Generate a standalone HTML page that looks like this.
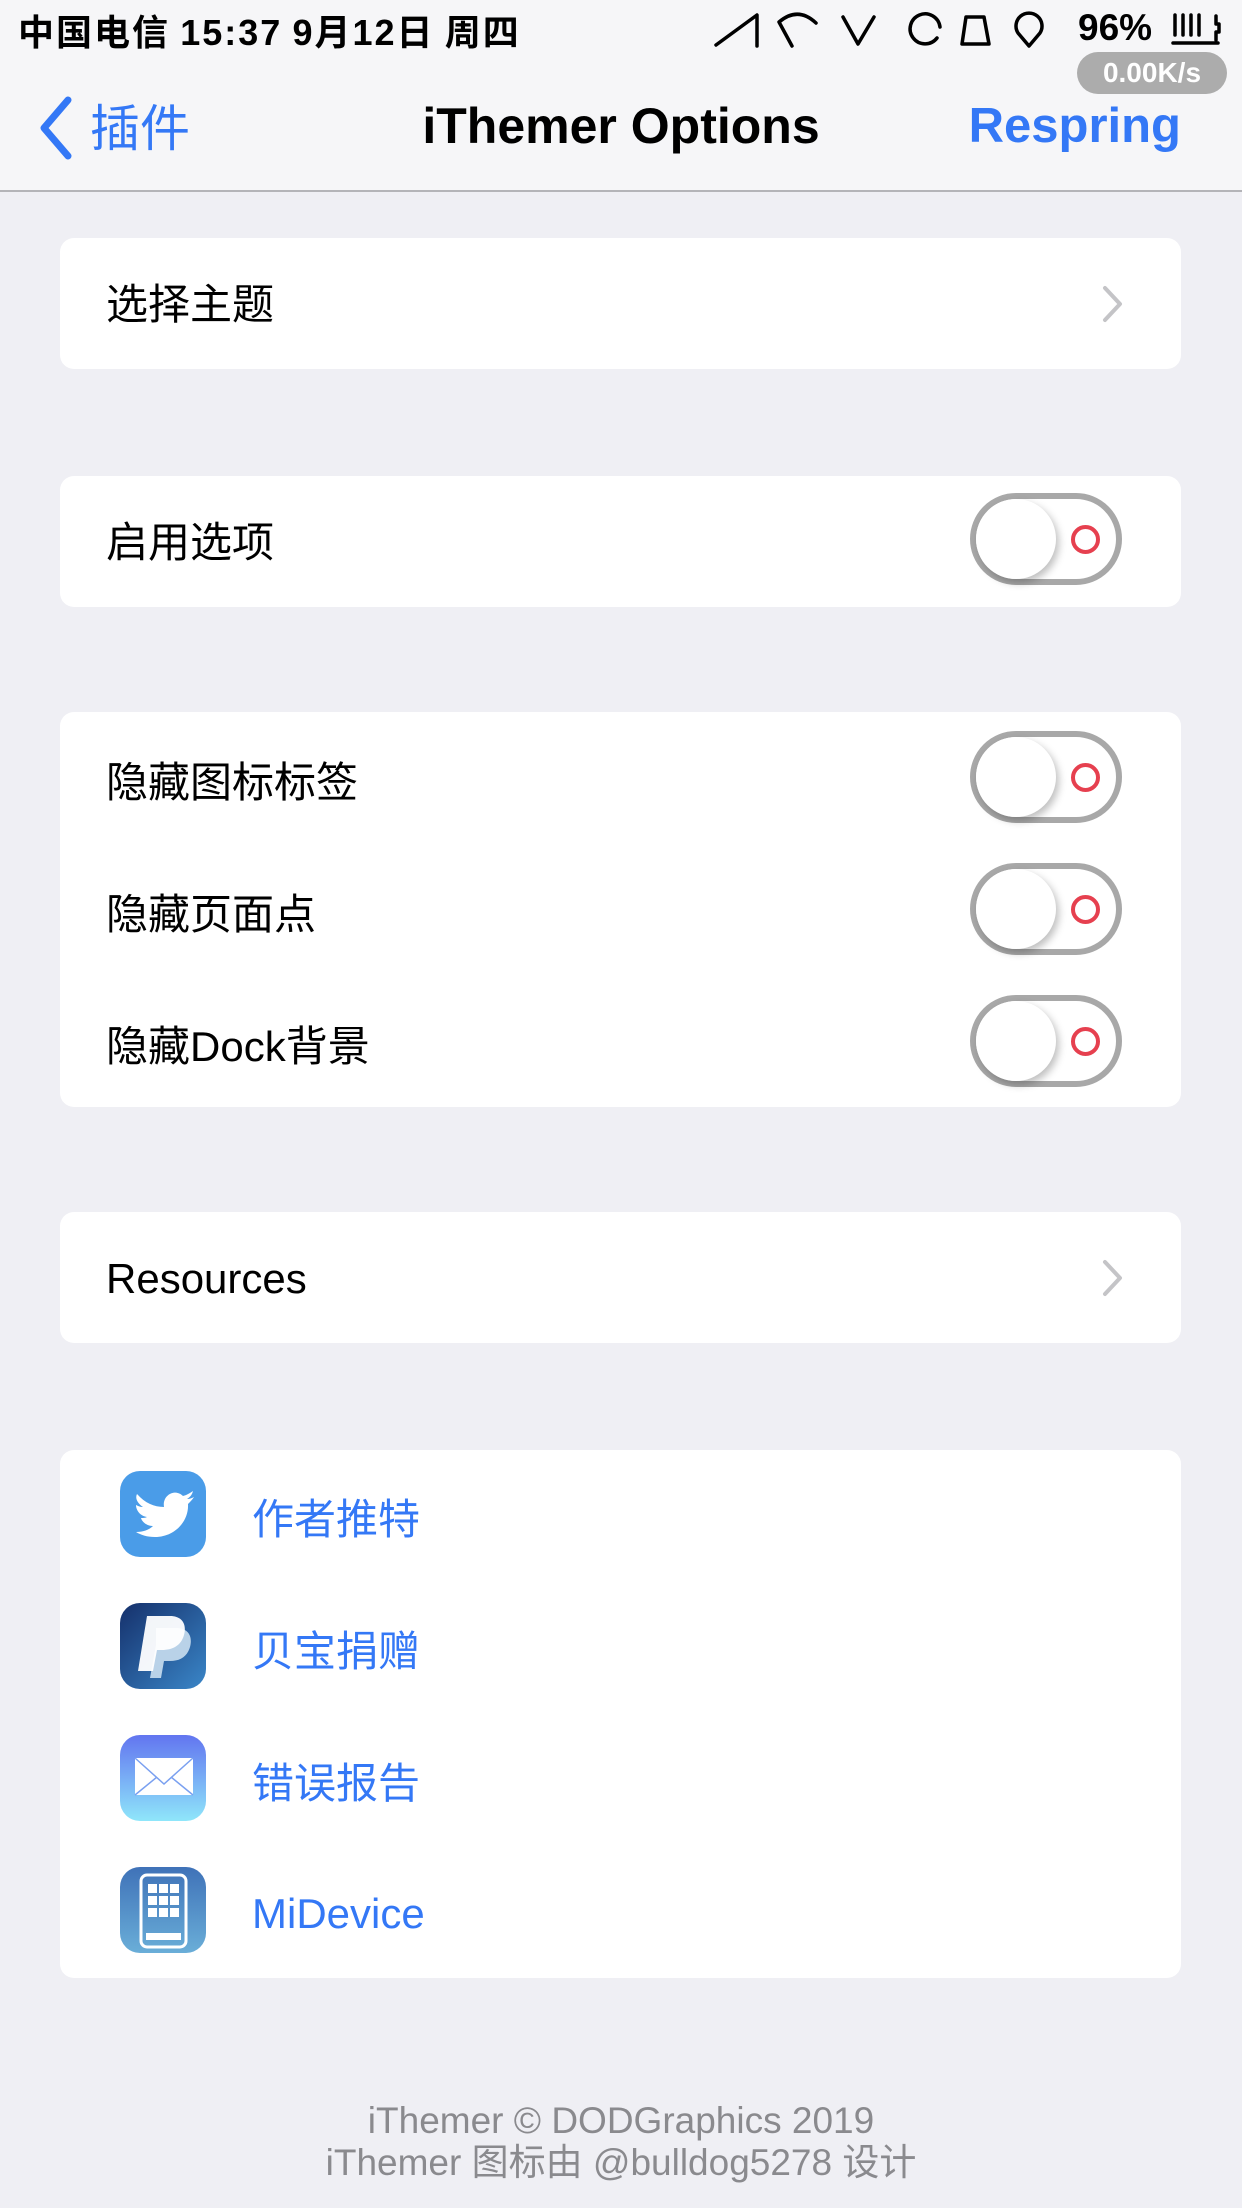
<!DOCTYPE html>
<html><head><meta charset="utf-8"><style>
*{margin:0;padding:0;box-sizing:border-box}
body{width:1242px;height:2208px;background:#efeff4;font-family:"Liberation Sans","Noto Sans CJK SC",sans-serif;position:relative;overflow:hidden}
.abs{position:absolute}
.nav{position:absolute;left:0;top:0;width:1242px;height:192px;background:#f6f6f8;border-bottom:2px solid #b4b4b8}
.card{position:absolute;left:60px;width:1121px;background:#fff;border-radius:14px}
.lbl{position:absolute;left:46px;font-size:42px;color:#000;font-family:"Noto Sans CJK SC","Liberation Sans",sans-serif}
.chev{position:absolute;right:56px}
.tog{position:absolute;left:910px;width:152px;height:92px;border:6px solid #a8a8a8;border-radius:46px;background:#fff}
.tog .k{position:absolute;left:0;top:0;width:80px;height:80px;border-radius:50%;background:#fff;box-shadow:3px 4px 8px rgba(0,0,0,.25)}
.tog .r{position:absolute;left:95px;top:26px;width:29px;height:29px;border:4px solid #e6404f;border-radius:50%}
.link{position:absolute;left:192px;font-size:42px;color:#3478f6;font-family:"Noto Sans CJK SC","Liberation Sans",sans-serif}
.ic{position:absolute;left:60px;width:86px;height:86px;border-radius:20px;overflow:hidden}
</style></head><body>
<div class="nav"></div>
<div class="abs" style="left:18px;top:4px;font-size:36px;font-weight:bold;color:#000;font-family:'Noto Sans CJK SC','Liberation Sans',sans-serif;letter-spacing:2px">中国电信 <span style="font-family:'Liberation Sans'">15:37</span> <span style="font-family:'Liberation Sans'">9</span>月<span style="font-family:'Liberation Sans'">12</span>日 周四</div>
<svg class="abs" style="left:700px;top:0" width="542" height="60" viewBox="700 0 542 60" fill="none" stroke="#000" stroke-width="3.5" stroke-linecap="round" stroke-linejoin="round">
<path d="M716 45 L757 15 L757 46"/>
<path d="M792 46 L779 22 Q798 6 816 23"/>
<path d="M843 17 L858 44 L874 17"/>
<path d="M937 38 A15 15 0 1 1 940 27"/>
<path d="M962 44 L989 44 L984 17 L966 17 Z"/>
<path d="M1029 46 L1018 33 A13 13 0 1 1 1040 33 Z"/>
<g transform="translate(17,0)"><path d="M1158 15v20M1166 15v20M1174 15v20M1182 15v20M1156 43h45M1199 16v8h3v8h-3v8"/></g>
</svg>
<div class="abs" style="left:1078px;top:7px;font-size:37px;font-weight:bold">96%</div>
<div class="abs" style="left:1077px;top:52px;width:150px;height:42px;border-radius:21px;background:#acacac;color:#fff;font-size:28px;font-weight:bold;text-align:center;line-height:42px">0.00K/s</div>
<svg class="abs" style="left:36px;top:96px" width="40" height="64" viewBox="0 0 40 64"><path d="M32 4 L8 32 L32 60" fill="none" stroke="#3478f6" stroke-width="7" stroke-linecap="round" stroke-linejoin="round"/></svg>
<div class="abs" style="left:90px;top:95px;font-size:50px;color:#3478f6;font-family:'Noto Sans CJK SC',sans-serif;line-height:60px">插件</div>
<div class="abs" style="left:0;width:1242px;top:96px;text-align:center;font-size:50px;font-weight:bold;color:#000;line-height:60px">iThemer Options</div>
<div class="abs" style="right:61px;top:96px;font-size:49px;font-weight:bold;color:#3478f6;line-height:60px">Respring</div>

<div class="card" style="top:238px;height:131px"><div class="lbl" style="top:33px">选择主题</div>
<svg class="chev" style="top:46px" width="24" height="40" viewBox="0 0 24 40"><path d="M4 4 L19 20 L4 36" fill="none" stroke="#c4c4c7" stroke-width="4" stroke-linecap="round" stroke-linejoin="round"/></svg></div>

<div class="card" style="top:476px;height:131px"><div class="lbl" style="top:33px">启用选项</div>
<div class="tog" style="top:17px"><div class="k"></div><div class="r"></div></div></div>

<div class="card" style="top:712px;height:395px">
<div class="lbl" style="top:37px">隐藏图标标签</div><div class="tog" style="top:19px"><div class="k"></div><div class="r"></div></div>
<div class="lbl" style="top:169px">隐藏页面点</div><div class="tog" style="top:151px"><div class="k"></div><div class="r"></div></div>
<div class="lbl" style="top:301px">隐藏<span style="font-family:'Liberation Sans'">Dock</span>背景</div><div class="tog" style="top:283px"><div class="k"></div><div class="r"></div></div>
</div>

<div class="card" style="top:1212px;height:131px"><div class="lbl" style="top:43px;font-family:'Liberation Sans'">Resources</div>
<svg class="chev" style="top:46px" width="24" height="40" viewBox="0 0 24 40"><path d="M4 4 L19 20 L4 36" fill="none" stroke="#c4c4c7" stroke-width="4" stroke-linecap="round" stroke-linejoin="round"/></svg></div>

<div class="card" style="top:1450px;height:528px">
<div class="ic" style="top:21px;background:#4a9ce8"><svg width="86" height="86" viewBox="0 0 86 86"><path d="M17 23 C25 32 34 36 44 36 C42 24 55 17 63 25 C67 24 70 22 73 20 C72 24 70 26 67 28 C70 28 72 27 74 26 C72 29 70 31 68 33 C69 50 55 66 35 66 C27 66 21 64 16 61 C23 61 29 59 33 55 C27 55 22 51 21 47 C23 47 25 47 27 46 C20 45 16 39 16 34 C18 35 20 36 23 36 C17 32 15 27 17 23 Z" fill="#fff"/></svg></div>
<div class="link" style="top:36px">作者推特</div>
<div class="ic" style="top:153px;background:linear-gradient(135deg,#15306b,#3a86c8)"><svg width="86" height="86" viewBox="0 0 86 86"><path d="M36 25 L56 25 C68 25 73 33 70 44 C67 54 60 58 50 58 L44 58 L41 75 L30 75 L36 42 Z" fill="#b9d2e8"/><path d="M27 13 L50 13 C62 13 67 21 64 32 C61 43 52 47 42 47 L37 47 L33 68 L18 68 Z" fill="#fff" opacity=".95"/></svg></div>
<div class="link" style="top:168px">贝宝捐赠</div>
<div class="ic" style="top:285px;background:linear-gradient(180deg,#6275f0,#8fe6fa)"><svg width="86" height="86" viewBox="0 0 86 86"><rect x="15" y="23" width="58" height="37" fill="#fff"/><path d="M15 23 L44 49 L73 23 M15 60 L37 42 M73 60 L51 42" fill="none" stroke="#7aa0f0" stroke-width="1.5"/></svg></div>
<div class="link" style="top:300px">错误报告</div>
<div class="ic" style="top:417px;background:linear-gradient(180deg,#3f72b8,#6aaed8)"><svg width="86" height="86" viewBox="0 0 86 86"><rect x="21" y="8" width="45" height="72" rx="6" fill="none" stroke="#fff" stroke-width="3"/><g fill="#fff"><rect x="28" y="17" width="9" height="9"/><rect x="39" y="17" width="9" height="9"/><rect x="50" y="17" width="9" height="9"/><rect x="28" y="29" width="9" height="9"/><rect x="39" y="29" width="9" height="9"/><rect x="50" y="29" width="9" height="9"/><rect x="28" y="41" width="9" height="9"/><rect x="39" y="41" width="9" height="9"/><rect x="50" y="41" width="9" height="9"/><rect x="26" y="66" width="35" height="7"/></g></svg></div>
<div class="link" style="top:440px;font-family:'Liberation Sans'">MiDevice</div>
</div>

<div class="abs" style="left:0;width:1242px;top:2100px;text-align:center;font-size:37px;color:#8a8a8e;line-height:42px;font-family:'Liberation Sans','Noto Sans CJK SC',sans-serif">iThemer © DODGraphics 2019<br>iThemer 图标由 @bulldog5278 设计</div>
</body></html>
